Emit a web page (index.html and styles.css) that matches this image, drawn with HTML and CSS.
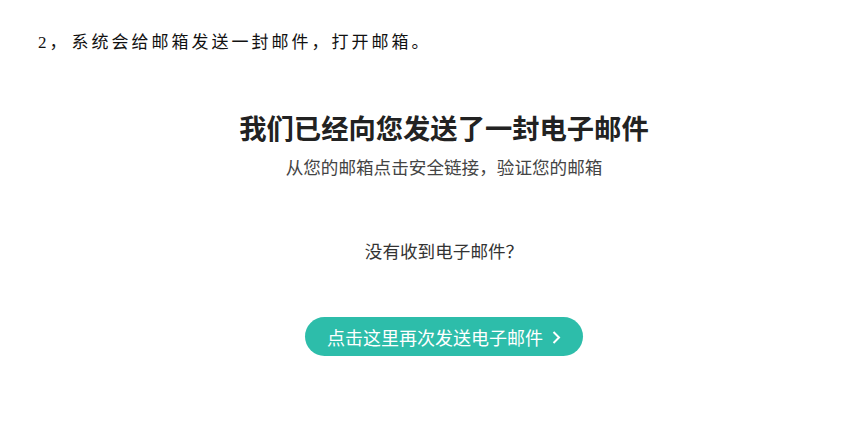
FILE: index.html
```html
<!DOCTYPE html>
<html lang="zh-CN">
<head>
    <meta charset="UTF-8">
    <meta name="viewport" content="width=device-width, initial-scale=1.0">
    <title>验证邮箱</title>
    <link rel="stylesheet" href="styles.css">
</head>
<body>
    <p class="step"><span class="step-num">2，</span>系统会给邮箱发送一封邮件，打开邮箱。</p>

    <div class="mail-panel">
        <h1 class="mail-title">我们已经向您发送了一封电子邮件</h1>
        <p class="mail-sub">从您的邮箱点击安全链接<span class="punct">，</span>验证您的邮箱</p>
        <p class="mail-ask">没有收到电子邮件<span class="punct">？</span></p>
        <a class="resend-btn" href="#">点击这里再次发送电子邮件
            <svg class="chev" width="9" height="13" viewBox="0 0 9 13"><path d="M1.5 1 L7 6.5 L1.5 12" fill="none" stroke="#fff" stroke-width="2"/></svg>
        </a>
    </div>
</body>
</html>
```

FILE: styles.css
```css
body {
    margin: 0;
    background: #fff;
    color: #222;
    font-family: "Noto Sans CJK SC", sans-serif;
}
.step {
    margin: 0;
    padding: 28px 0 0 38px;
    font-size: 17px;
    line-height: 26px;
    letter-spacing: 3px;
    color: #111;
}
.step-num {
    font-family: "Liberation Serif", "Noto Sans CJK SC", serif;
    margin-right: 2px;
}
.mail-panel {
    padding-left: 44px;
    display: flex;
    flex-direction: column;
    align-items: center;
}
.mail-title {
    margin: 51px 0 0;
    font-size: 27.3px;
    line-height: 40px;
    font-weight: bold;
    color: #222;
}
.mail-sub {
    margin: 7px 0 0;
    font-size: 17.6px;
    line-height: 26px;
    color: #444;
}
.mail-ask {
    margin: 58px 0 0;
    font-size: 17.6px;
    line-height: 26px;
    color: #333;
}
/* centred full-width punctuation, as in the original */
.punct {
    font-family: "Noto Sans CJK TC", sans-serif;
}
.resend-btn {
    margin-top: 53px;
    width: 278px;
    height: 39px;
    border-radius: 20px;
    background: #2dbdaa;
    color: #fff;
    text-decoration: none;
    font-size: 18px;
    display: flex;
    align-items: center;
    justify-content: center;
    gap: 9px;
}
.chev {
    margin-top: 1px;
}
```
